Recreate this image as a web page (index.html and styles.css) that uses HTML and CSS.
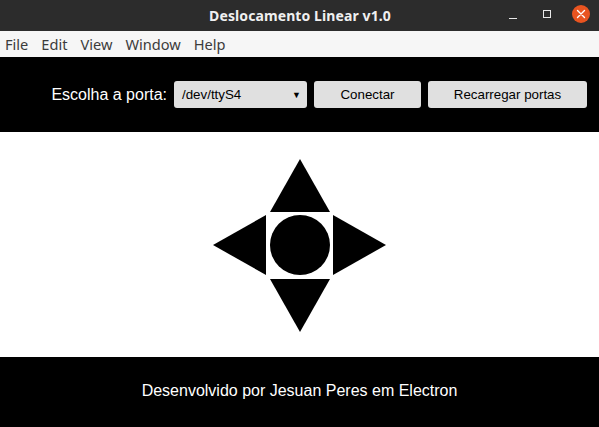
FILE: index.html
```html
<!DOCTYPE html>
<html>
<head>
<meta charset="utf-8">
<link rel="stylesheet" href="styles.css">
</head>
<body>
<div class="titlebar">
  <div class="title">Deslocamento Linear v1.0</div>
  <div class="controls">
    <span class="ctl min"></span>
    <span class="ctl max"></span>
    <span class="ctl close">
      <svg width="18" height="18" viewBox="0 0 18 18"><path d="M5.5 5.5 L12.5 12.5 M12.5 5.5 L5.5 12.5" stroke="#fff" stroke-width="1.4" stroke-linecap="round"/></svg>
    </span>
  </div>
</div>
<div class="menubar">
  <span>File</span><span>Edit</span><span>View</span><span>Window</span><span>Help</span>
</div>
<header class="top">
  <label class="label">Escolha a porta:</label>
  <div class="select"><span>/dev/ttyS4</span><span class="arrow">▼</span></div>
  <button class="btn btn-connect">Conectar</button>
  <button class="btn btn-reload">Recarregar portas</button>
</header>
<main class="pad-area">
  <div class="pad">
    <div class="cell up"><svg width="60" height="53" viewBox="0 0 60 53"><polygon points="30,0 60,53 0,53" fill="#000"/></svg></div>
    <div class="cell left"><svg width="53" height="60" viewBox="0 0 53 60"><polygon points="0,30 53,0 53,60" fill="#000"/></svg></div>
    <div class="cell center"><div class="dot"></div></div>
    <div class="cell right"><svg width="53" height="60" viewBox="0 0 53 60"><polygon points="53,30 0,0 0,60" fill="#000"/></svg></div>
    <div class="cell down"><svg width="60" height="53" viewBox="0 0 60 53"><polygon points="30,53 60,0 0,0" fill="#000"/></svg></div>
  </div>
</main>
<footer class="footer">Desenvolvido por Jesuan Peres em Electron</footer>
</body>
</html>
```
FILE: styles.css
```css
html, body { margin: 0; padding: 0; }
body { width: 599px; height: 427px; overflow: hidden; background: #fff; font-family: "Liberation Sans", Arial, sans-serif; display: flex; flex-direction: column; }

.titlebar { height: 31px; background: #2c2c2c; display: flex; align-items: center; justify-content: center; position: relative; }
.title { color: #f0f0f0; font-family: "Noto Sans", "DejaVu Sans", sans-serif; font-weight: bold; font-size: 14px; letter-spacing: 0.1px; margin-left: 1px; }
.controls { position: absolute; right: 0; top: 0; height: 31px; display: flex; align-items: center; }
.ctl { display: block; }
.min { width: 8px; height: 1px; background: #e8e8e8; margin-top: 6px; margin-right: 26px; }
.max { width: 6px; height: 6px; border: 1px solid #e8e8e8; margin-top: -4px; margin-right: 21px; }
.close { width: 18px; height: 18px; border-radius: 50%; background: #e95420; margin-right: 9px; margin-top: -4px; }
.close svg { display: block; }

.menubar { height: 26px; background: #f6f6f6; display: flex; align-items: center; padding-left: 5px; gap: 13px; font-family: "Noto Sans", "DejaVu Sans", sans-serif; font-size: 14.6px; color: #3c3c3c; }

.top { height: 75px; background: #000; display: flex; align-items: center; justify-content: flex-end; padding-right: 12px; }
.label { color: #fff; font-size: 16px; margin-right: 7px; }
.select { width: 119px; height: 27px; background: #e0e0e0; border-radius: 3px; display: flex; align-items: center; justify-content: space-between; padding: 0 6px 0 8px; font-size: 13.33px; color: #000; margin-right: 7px; box-sizing: content-box; }
.arrow { font-size: 9px; }
.btn { height: 27px; background: #e0e0e0; border: none; border-radius: 3px; font-family: "Liberation Sans", Arial, sans-serif; font-size: 13.33px; color: #000; padding: 0; }
.btn-connect { width: 107px; margin-right: 7px; }
.btn-reload { width: 159px; }

.pad-area { height: 225px; display: flex; align-items: center; justify-content: center; }
.pad { display: grid; grid-template-columns: 53px 60px 53px; grid-template-rows: 53px 60px 53px; column-gap: 3.5px; row-gap: 3.5px; margin-top: 1px; }
.cell svg { display: block; }
.up { grid-column: 2; grid-row: 1; }
.left { grid-column: 1; grid-row: 2; }
.center { grid-column: 2; grid-row: 2; }
.right { grid-column: 3; grid-row: 2; }
.down { grid-column: 2; grid-row: 3; }
.dot { width: 60px; height: 60px; border-radius: 50%; background: #000; }

.footer { height: 70px; background: #000; color: #fff; font-size: 16px; display: flex; align-items: center; justify-content: center; padding-bottom: 3px; box-sizing: border-box; }
```
